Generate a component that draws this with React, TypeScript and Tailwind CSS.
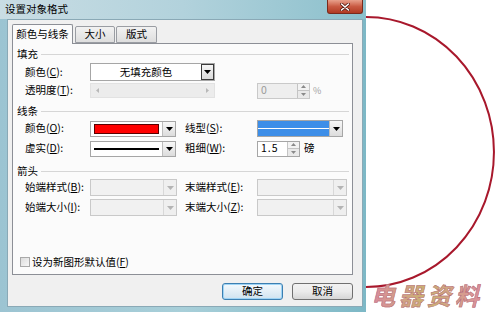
import type { ReactNode } from "react";

const font = "font-['Noto_Sans_CJK_SC','Liberation_Sans',sans-serif]";

function Arrow({ disabled }: { disabled?: boolean }) {
    return (
        <svg width="7" height="4" viewBox="0 0 7 4">
            <path d="M0 0h7L3.5 4z" fill={disabled ? "#b4b4b4" : "#000"} />
        </svg>
    );
}

function Label({ text, k, w }: { text: string; k: string; w: string }) {
    return (
        <div className={`${w} shrink-0 text-[10.5px] leading-none text-black whitespace-nowrap`}>
            {text}(<u>{k}</u>):
        </div>
    );
}

function Combo({
    w,
    h = "h-[17px]",
    disabled,
    dark,
    children,
}: {
    w: string;
    h?: string;
    disabled?: boolean;
    dark?: boolean;
    children?: ReactNode;
}) {
    return (
        <div
            className={`${w} ${h} shrink-0 flex border ${
                disabled ? "border-[#c9c9c9] bg-[#f1f1f1]" : "border-[#a6a6a6] bg-white"
            }`}
        >
            <div className="flex-1 flex items-center px-[3px] overflow-hidden">{children}</div>
            <div
                className={`w-[13px] flex items-center justify-center ${
                    dark
                        ? "border border-[#3a3a3a] bg-linear-to-b from-[#f6f6f6] to-[#d9d9d9]"
                        : disabled
                        ? "border-l border-[#d8d8d8] bg-[#efefef]"
                        : "border-l border-[#bdbdbd] bg-linear-to-b from-[#f8f8f8] to-[#dcdcdc]"
                }`}
            >
                <Arrow disabled={disabled} />
            </div>
        </div>
    );
}

function Spin({ w, value, disabled }: { w: string; value: string; disabled?: boolean }) {
    return (
        <div
            className={`${w} h-[16px] shrink-0 flex border ${
                disabled ? "border-[#c9c9c9] bg-[#eeeeee] text-[#9a9a9a]" : "border-[#a6a6a6] bg-white text-black"
            }`}
        >
            <div className="flex-1 flex items-center pl-[3px] text-[10.5px] leading-none tracking-[1px]">{value}</div>
            <div className="w-[12px] flex flex-col border-l border-[#c4c4c4]">
                <div className="flex-1 flex items-center justify-center bg-[#f3f3f3] border-b border-[#c4c4c4]">
                    <svg width="5" height="3" viewBox="0 0 5 3">
                        <path d="M0 3h5L2.5 0z" fill="#8a8a8a" />
                    </svg>
                </div>
                <div className="flex-1 flex items-center justify-center bg-[#e9e9e9]">
                    <svg width="5" height="3" viewBox="0 0 5 3">
                        <path d="M0 0h5L2.5 3z" fill="#8a8a8a" />
                    </svg>
                </div>
            </div>
        </div>
    );
}

function Header({ text, mt }: { text: string; mt: string }) {
    return (
        <div className={`${mt} h-[12px] flex items-center pl-[4px] pr-[3px]`}>
            <span className="text-[10.5px] leading-none text-black">{text}</span>
            <div className="flex-1 ml-[3px] h-px bg-[#d6d6d6]" />
        </div>
    );
}

export default function App() {
    return (
        <div className={`relative w-[496px] h-[312px] bg-white overflow-hidden ${font}`}>
            {/* Dialog window */}
            <div className="w-[366px] h-[312px] flex flex-col bg-linear-to-r from-[#9cc4d2] via-[#a8cfd9] to-[#7db8c6]">
                {/* Title bar */}
                <div className="h-[19px] flex items-start justify-between pl-[5px] pr-[3px] bg-linear-to-r from-[#c9dde4] via-[#b2d2dc] to-[#8bc0cc]">
                    <span className="mt-[4px] text-[10.5px] leading-none text-black">设置对象格式</span>
                    <div className="w-[36px] h-[14px] flex items-center justify-center rounded-b-[3px] border border-t-0 border-[#7a2a1c] bg-linear-to-b from-[#e8a08c] via-[#c95a43] to-[#b03a22]">
                        <svg width="10" height="8" viewBox="0 0 10 8">
                            <path d="M1.5 1 8.5 7M8.5 1 1.5 7" stroke="#5a1a10" strokeWidth="3" strokeLinecap="round" />
                            <path d="M1.5 1 8.5 7M8.5 1 1.5 7" stroke="#fff" strokeWidth="1.6" strokeLinecap="round" />
                        </svg>
                    </div>
                </div>

                {/* Client area */}
                <div className="ml-[7px] mr-[3px] h-[288px] flex flex-col bg-[#f0f0f0] border border-[#8aa9b6]">
                    {/* Tabs */}
                    <div className="mt-[4px] ml-[4px] h-[20px] flex items-end relative z-10">
                        <div className="w-[61px] h-[20px] flex items-center justify-center bg-[#fbfbfb] border border-b-0 border-[#8c8f96] rounded-t-[2px] text-[10.5px] leading-none text-black">
                            颜色与线条
                        </div>
                        <div className="ml-[2px] w-[40px] h-[17px] mb-px flex items-center justify-center bg-linear-to-b from-[#f2f2f2] to-[#dedede] border border-[#9a9da3] rounded-t-[2px] text-[10.5px] leading-none text-black">
                            大小
                        </div>
                        <div className="ml-[1px] w-[41px] h-[17px] mb-px flex items-center justify-center bg-linear-to-b from-[#f2f2f2] to-[#dedede] border border-[#9a9da3] rounded-t-[2px] text-[10.5px] leading-none text-black">
                            版式
                        </div>
                    </div>

                    {/* Tab panel */}
                    <div className="-mt-px ml-[4px] w-[341px] h-[232px] flex flex-col pt-[4px] bg-[#fbfbfb] border border-[#8c8f96]">
                        <Header text="填充" mt="mt-0" />
                        <div className="mt-[3px] h-[18px] flex items-center pl-[12px]">
                            <Label text="颜色" k="C" w="w-[65px]" />
                            <Combo w="w-[125px]" h="h-[18px]" dark>
                                <span className="flex-1 text-center text-[10.5px] leading-none text-black">无填充颜色</span>
                            </Combo>
                        </div>
                        <div className="mt-[1px] h-[17px] flex items-center pl-[12px]">
                            <Label text="透明度" k="T" w="w-[65px]" />
                            <div className="w-[125px] h-[15px] shrink-0 flex items-center justify-between px-[5px] bg-[#ececec] border border-[#e2e2e2]">
                                <svg width="3" height="5" viewBox="0 0 3 5">
                                    <path d="M3 0v5L0 2.5z" fill="#b8b8b8" />
                                </svg>
                                <svg width="3" height="5" viewBox="0 0 3 5">
                                    <path d="M0 0v5L3 2.5z" fill="#b8b8b8" />
                                </svg>
                            </div>
                            <div className="ml-[42px]">
                                <Spin w="w-[53px]" value="0" disabled />
                            </div>
                            <span className="ml-[3px] text-[9px] leading-none text-[#a0a0a0]">%</span>
                        </div>

                        <Header text="线条" mt="mt-[6px]" />
                        <div className="mt-[3px] h-[17px] flex items-center pl-[12px]">
                            <Label text="颜色" k="O" w="w-[65px]" />
                            <Combo w="w-[86px]" h="h-[16px]">
                                <div className="w-full h-[10px] bg-[#ff0000] border border-[#5a0000]" />
                            </Combo>
                            <div className="ml-[9px]">
                                <Label text="线型" k="S" w="w-[72px]" />
                            </div>
                            <Combo w="w-[86px]" h="h-[17px]">
                                <div className="-mx-[3px] w-[calc(100%+6px)] h-full flex items-center bg-[#3d8ee8]">
                                    <div className="w-full h-px bg-white" />
                                </div>
                            </Combo>
                        </div>
                        <div className="mt-[3px] h-[17px] flex items-center pl-[12px]">
                            <Label text="虚实" k="D" w="w-[65px]" />
                            <Combo w="w-[86px]" h="h-[16px]">
                                <div className="w-full h-[2px] bg-black" />
                            </Combo>
                            <div className="ml-[9px]">
                                <Label text="粗细" k="W" w="w-[72px]" />
                            </div>
                            <Spin w="w-[43px]" value="1.5" />
                            <span className="ml-[4px] text-[10.5px] leading-none text-black">磅</span>
                        </div>

                        <Header text="箭头" mt="mt-[8px]" />
                        <div className="mt-[2px] h-[17px] flex items-center pl-[12px]">
                            <Label text="始端样式" k="B" w="w-[65px]" />
                            <Combo w="w-[87px]" disabled />
                            <div className="ml-[8px]">
                                <Label text="末端样式" k="E" w="w-[72px]" />
                            </div>
                            <Combo w="w-[90px]" disabled />
                        </div>
                        <div className="mt-[3px] h-[17px] flex items-center pl-[12px]">
                            <Label text="始端大小" k="I" w="w-[65px]" />
                            <Combo w="w-[87px]" disabled />
                            <div className="ml-[8px]">
                                <Label text="末端大小" k="Z" w="w-[72px]" />
                            </div>
                            <Combo w="w-[90px]" disabled />
                        </div>

                        <div className="mt-[40px] h-[12px] flex items-center pl-[7px]">
                            <div className="w-[10px] h-[10px] border border-[#a9a9a9] bg-linear-to-br from-[#dcdcdc] to-[#f7f7f7]" />
                            <span className="ml-[2px] text-[10.5px] leading-none text-black">
                                设为新图形默认值(<u>F</u>)
                            </span>
                        </div>
                    </div>

                    {/* Buttons */}
                    <div className="mt-[8px] mr-[9px] flex justify-end gap-[9px]">
                        <button className="w-[61px] h-[17px] flex items-center justify-center rounded-[3px] border border-[#3c7fb1] bg-linear-to-b from-[#f3f9fd] via-[#e2eef6] to-[#cfe3f0] shadow-[inset_0_0_0_1px_#9fd4f5] text-[10.5px] leading-none text-black">
                            确定
                        </button>
                        <button className="w-[61px] h-[17px] flex items-center justify-center rounded-[3px] border border-[#707070] bg-linear-to-b from-[#f2f2f2] via-[#ebebeb] to-[#d6d6d6] text-[10.5px] leading-none text-black">
                            取消
                        </button>
                    </div>
                </div>
            </div>

            {/* Red arc drawn over the page */}
            <svg className="absolute left-0 top-0" width="496" height="312" viewBox="0 0 496 312">
                <path d="M366 17 A128 135 0 0 1 366 287" fill="none" stroke="#a8182c" strokeWidth="2" />
            </svg>

            {/* Watermark */}
            <div className="absolute left-[371px] top-[277px] text-[24px] leading-[35px] font-bold italic tracking-[4px] bg-linear-to-r from-[#d98a9c] via-[#c9b46e] to-[#dc8e9e] bg-clip-text text-transparent [-webkit-text-stroke:0.5px_#b56a7a]">
                电器资料
            </div>
        </div>
    );
}
